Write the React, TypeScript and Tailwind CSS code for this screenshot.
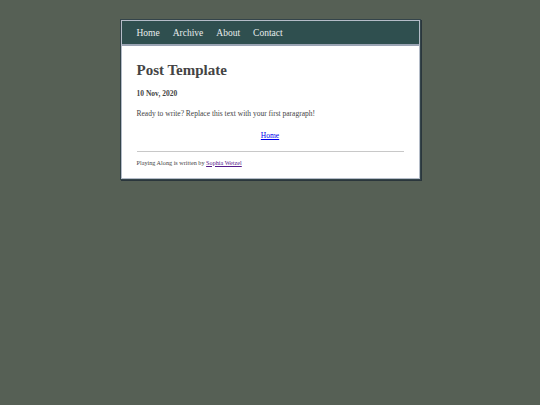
export default function App() {
  const links = ['Home', 'Archive', 'About', 'Contact'];
  return (
    <div className="min-h-[405px] w-full bg-[#566055] pt-[20px] font-['Liberation_Serif',serif]">
      <div className="mx-auto w-[299px] border border-[#b4bcc8] bg-white shadow-[0_0_0_1px_#34444a,1px_1px_0_1px_#2a363c]">
        <nav className="flex h-[25px] items-center gap-[13px] border-b-2 border-[#9aa4b4] bg-[#2f4f4f] px-[15px] pt-[1px] text-[9.5px] text-[#e8ecec]">
          {links.map((l) => (
            <a key={l} href="#">
              {l}
            </a>
          ))}
        </nav>
        <main className="px-[15px] pb-[11px] pt-[14px] text-[#444]">
          <h1 className="text-[15px] font-bold leading-[20px]">Post Template</h1>
          <p className="mt-[8px] text-[7.5px] font-bold">10 Nov, 2020</p>
          <p className="mt-[9px] text-[7.5px]">Ready to write? Replace this text with your first paragraph!</p>
          <p className="mt-[10px] text-center text-[7.5px]">
            <a href="#" className="text-[#0000ee] underline">
              Home
            </a>
          </p>
          <hr className="mt-[10px] border-t border-[#c8c8c8]" />
          <p className="mt-[6px] text-[6.2px]">
            Playing Along is written by{' '}
            <a href="#" className="text-[#551a8b] underline">
              Sophia Wetzel
            </a>
          </p>
        </main>
      </div>
    </div>
  );
}
